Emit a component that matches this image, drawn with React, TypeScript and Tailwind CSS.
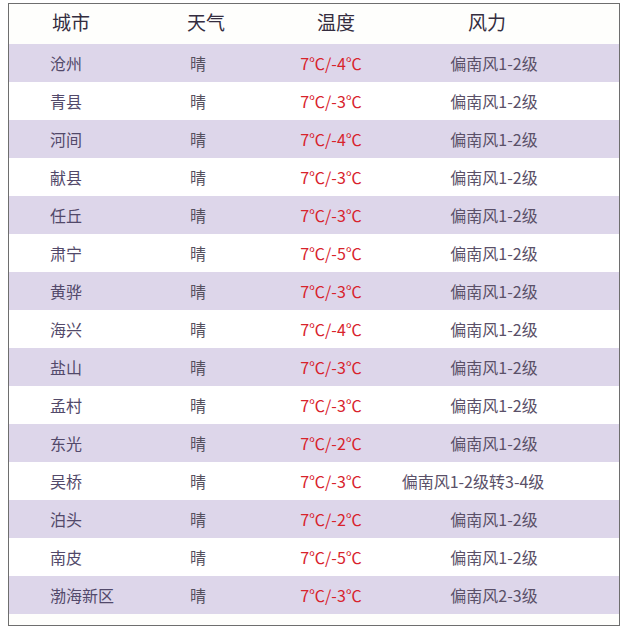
const rows = [
  { city: "沧州", temp: "7℃/-4℃", wind: "偏南风1-2级" },
  { city: "青县", temp: "7℃/-3℃", wind: "偏南风1-2级" },
  { city: "河间", temp: "7℃/-4℃", wind: "偏南风1-2级" },
  { city: "献县", temp: "7℃/-3℃", wind: "偏南风1-2级" },
  { city: "任丘", temp: "7℃/-3℃", wind: "偏南风1-2级" },
  { city: "肃宁", temp: "7℃/-5℃", wind: "偏南风1-2级" },
  { city: "黄骅", temp: "7℃/-3℃", wind: "偏南风1-2级" },
  { city: "海兴", temp: "7℃/-4℃", wind: "偏南风1-2级" },
  { city: "盐山", temp: "7℃/-3℃", wind: "偏南风1-2级" },
  { city: "孟村", temp: "7℃/-3℃", wind: "偏南风1-2级" },
  { city: "东光", temp: "7℃/-2℃", wind: "偏南风1-2级" },
  { city: "吴桥", temp: "7℃/-3℃", wind: "偏南风1-2级转3-4级" },
  { city: "泊头", temp: "7℃/-2℃", wind: "偏南风1-2级" },
  { city: "南皮", temp: "7℃/-5℃", wind: "偏南风1-2级" },
  { city: "渤海新区", temp: "7℃/-3℃", wind: "偏南风2-3级" },
]

export default function App() {
  return (
    <div className="w-[626px] h-[630px] bg-white pt-[3px] pl-[8px] font-['Noto_Sans_CJK_SC',sans-serif]">
      <div className="w-[612px] h-[623px] border border-[#6e6e6e] bg-[#fefefc] flex flex-col">
        {/* Header */}
        <div className="h-[40px] flex items-center pb-[4px] text-[19px] text-[#342d3f]">
          <div className="w-[178px] pl-[43px]">城市</div>
          <div className="w-[130px]">天气</div>
          <div className="w-[151px]">温度</div>
          <div>风力</div>
        </div>

        {/* Rows */}
        {rows.map((r, i) => (
          <div
            key={r.city}
            className={`h-[38px] flex items-center text-[16px] ${i % 2 === 0 ? "bg-[#ddd6ea]" : "bg-white"}`}
          >
            <div className="w-[121px] pl-[41px] text-[#52496a]">{r.city}</div>
            <div className="w-[136px] text-center text-[#55505e]">晴</div>
            <div className="w-[130px] text-center text-[#d8232c] whitespace-nowrap">{r.temp}</div>
            <div className={`w-[196px] text-center text-[#5a5068] ${r.wind.length > 8 ? "pr-[42px] whitespace-nowrap" : ""}`}>
              {r.wind}
            </div>
          </div>
        ))}
      </div>
    </div>
  )
}
